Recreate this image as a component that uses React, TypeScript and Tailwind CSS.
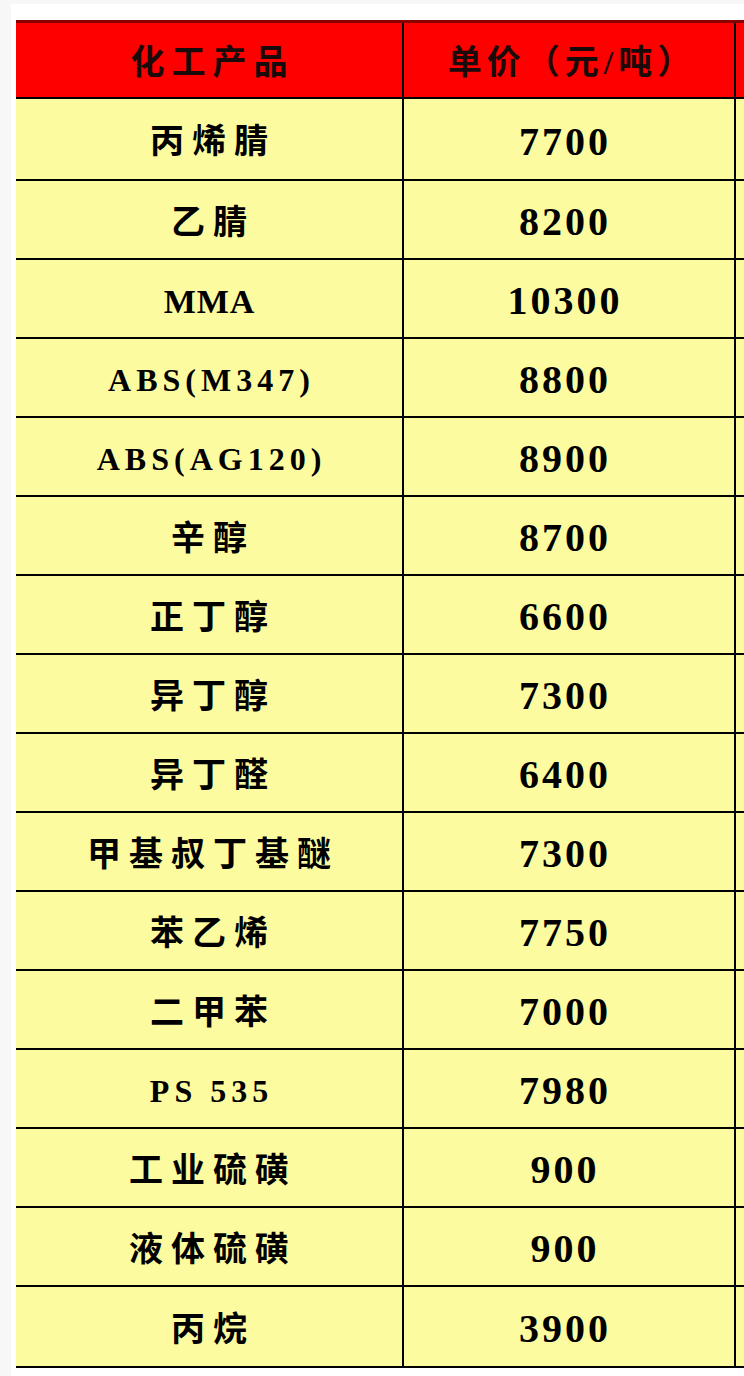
const rows = [
  { name: "丙烯腈", price: "7700", kind: "cjk" },
  { name: "乙腈", price: "8200", kind: "cjk" },
  { name: "MMA", price: "10300", kind: "mma" },
  { name: "ABS(M347)", price: "8800", kind: "latin" },
  { name: "ABS(AG120)", price: "8900", kind: "latin" },
  { name: "辛醇", price: "8700", kind: "cjk" },
  { name: "正丁醇", price: "6600", kind: "cjk" },
  { name: "异丁醇", price: "7300", kind: "cjk" },
  { name: "异丁醛", price: "6400", kind: "cjk" },
  { name: "甲基叔丁基醚", price: "7300", kind: "cjk" },
  { name: "苯乙烯", price: "7750", kind: "cjk" },
  { name: "二甲苯", price: "7000", kind: "cjk" },
  { name: "PS 535", price: "7980", kind: "latin" },
  { name: "工业硫磺", price: "900", kind: "cjk" },
  { name: "液体硫磺", price: "900", kind: "cjk" },
  { name: "丙烷", price: "3900", kind: "cjk" },
]

const nameSize: Record<string, string> = {
  cjk: "text-[34px] tracking-[8px] pl-[8px]",
  latin: "text-[32px] tracking-[5px] pl-[5px]",
  mma: "text-[34px] tracking-[1px] pl-[1px]",
}

const font = "font-['Liberation_Serif','Noto_Sans_CJK_SC',serif]"

export default function App() {
  return (
    <div className="w-[744px] h-[1376px] overflow-hidden bg-[#f7f7f7] pt-[4px] pl-[11px]">
      <div className={`bg-white h-full pt-[16px] pl-[5px] ${font} text-black`}>
        {/* header */}
        <div className="flex h-[79px] bg-[#fe0000] border-t-[3px] border-t-[#8a0000] border-b-2 border-b-black">
          <div className="w-[388px] shrink-0 flex items-center justify-center border-r-2 border-black pl-[7px] pt-[4px] text-[34px] font-bold tracking-[7px] text-[#1a0a0a]">
            化工产品
          </div>
          <div className="w-[332px] shrink-0 flex items-center justify-center border-r-2 border-black pl-[6px] pt-[4px] text-[34px] font-bold tracking-[5px] text-[#1a0a0a]">
            单价（元/吨）
          </div>
          <div className="flex-1" />
        </div>

        {/* body */}
        {rows.map((r, i) => (
          <div
            key={r.name}
            className={`flex bg-[#fdfb9f] border-b-2 border-black ${
              i === 0 ? "h-[82px]" : i === rows.length - 1 ? "h-[81px]" : "h-[79px]"
            }`}
          >
            <div
              className={`w-[388px] shrink-0 flex items-center justify-center border-r-2 border-black font-bold pt-[5px] ${nameSize[r.kind]}`}
            >
              {r.name}
            </div>
            <div className="w-[332px] shrink-0 flex items-center justify-center border-r-2 border-black text-[40px] font-bold tracking-[3px] pr-[8px] pt-[5px]">
              {r.price}
            </div>
            <div className="flex-1" />
          </div>
        ))}
      </div>
    </div>
  )
}
